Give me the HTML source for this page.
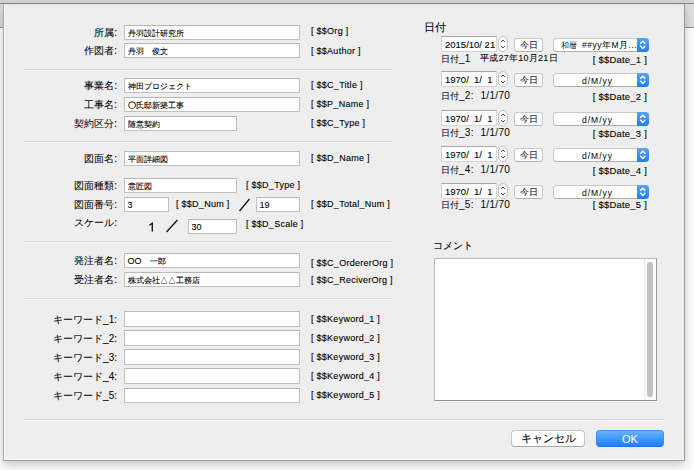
<!DOCTYPE html>
<html><head><meta charset="utf-8"><style>
*{box-sizing:border-box}
html,body{margin:0;padding:0;width:694px;height:470px;overflow:hidden;background:#fdfdfd;font-family:'Liberation Sans', sans-serif;color:#000}
.lab,.rlab,.dlab,.btn,.pbtn{-webkit-text-stroke:0.06px #000}
.bgtop{position:absolute;left:0;top:0;width:694px;height:4px;background:#d4d2d6;border-bottom:1px solid #8a8a8a}
.bgl{position:absolute;left:0;top:4px;width:3px;height:24px;background:#dcdcdc;border-bottom:1px solid #8c8c8c}
.bgr{position:absolute;left:685px;top:4px;width:9px;height:24px;background:#dedede;border-bottom:1px solid #8c8c8c}
.dlg{position:absolute;left:3px;top:4px;width:682px;height:457px;background:#eeeeee;border-left:1px solid #a9a9a9;border-right:1px solid #999;border-bottom:1px solid #9a9a9a;box-shadow:0 4px 9px rgba(0,0,0,0.22), inset 1px 0 0 #f8f8f8, inset 0 -1px 0 #fafafa, inset 0 3px 3px -2px rgba(0,0,0,0.07)}
.abs{position:absolute}
.lab{position:absolute;left:0;width:117px;text-align:right;height:15px;line-height:15px;font-size:10px;white-space:nowrap}
.fld{position:absolute;-webkit-text-stroke:0.1px #000;height:15px;background:#fff;border:1px solid #c0c0c0;border-top-color:#b8b8b8;font-size:8px;line-height:13px;padding-top:1px;padding-left:2.5px;white-space:nowrap;overflow:hidden}
.tag{position:absolute;-webkit-text-stroke:0.12px #000;height:15px;line-height:15px;font-size:9px;letter-spacing:0.27px;white-space:nowrap}
.la{font-style:normal;font-size:9px}
.one{position:absolute;font-size:13px;line-height:15px}
.sl{position:absolute}
.sep{position:absolute;height:2px;border-top:1px solid #d8d8d8;border-bottom:1px solid #f6f6f6}
.rlab{position:absolute;font-size:10px;line-height:15px;white-space:nowrap}
.dfld{position:absolute;-webkit-text-stroke:0.1px #000;width:56px;height:16px;background:#fff;border:1px solid #d6d6d6;border-top-color:#a9a9a9;font-size:9.5px;line-height:14px;padding-top:1px;padding-left:3px;white-space:nowrap}
.step{position:absolute;width:10px;height:16px;border:1px solid #c4c4c4;border-radius:5px;background:#fdfdfd}
.step svg{position:absolute;left:-1px;top:-1px}
.btn{position:absolute;width:29px;height:14px;background:#fff;border:1px solid #c9c9c9;border-bottom-color:#b0b0b0;border-radius:3px;font-size:9px;line-height:12px;text-align:center}
.pop{position:absolute;width:96px;height:14px;background:#fff;border:1px solid #c9c9c9;border-bottom-color:#aeaeae;border-radius:3px;font-size:10px;line-height:12px;text-align:center;padding-right:12px;white-space:nowrap}
.pop span{position:absolute;top:0}
.pb{position:absolute;right:-1px;top:-1px;width:12px;height:14px;background:linear-gradient(#58a2f9,#1d7df7);border-radius:0 4px 4px 0}
.pb svg{position:absolute;left:0;top:0}
.lt{font-size:10px;-webkit-text-stroke:0;letter-spacing:0.3px}
.vj{font-size:9px;letter-spacing:0.25px}
.dlab{position:absolute;font-size:9px;line-height:15px;white-space:nowrap}
.dtag{position:absolute;-webkit-text-stroke:0.1px #000;width:100px;text-align:right;font-size:9.5px;letter-spacing:0.2px;line-height:15px;white-space:nowrap}
.ta{position:absolute;left:434px;top:258px;width:223px;height:143px;background:#fff;border:1px solid #bcbcbc;border-right-color:#9a9a9a;border-bottom-color:#909090;box-shadow:0 1px 0 #f8f8f8}
.sb{position:absolute;right:0;top:0;width:12px;height:141px;background:#fafafa;border-left:1px solid #ececec}
.th{position:absolute;left:2px;top:3px;width:6px;height:135px;background:#c2c2c2;border-radius:4px}
.pbtn{position:absolute;height:17px;background:#fff;border:1px solid #c6c6c6;border-bottom-color:#a9a9a9;border-radius:4px;font-size:11px;line-height:15px;text-align:center}
.okbtn{position:absolute;height:17px;background:linear-gradient(#6ab1fa,#1a81fb);border:1px solid #3d8ef5;border-bottom-color:#1f6fe8;border-radius:4px;font-size:11px;line-height:16px;text-align:center;color:#fff}
</style></head>
<body>
<div class="bgtop"></div><div class="bgl"></div><div class="bgr"></div>
<div class="dlg"></div>
<div class="lab" style="top:25px">所属:</div>
<div class="fld" style="left:124px;top:25px;width:176px;height:15px"><span>丹羽設計研究所</span></div>
<div class="tag" style="left:311px;top:24px">[ $$Org ]</div>
<div class="lab" style="top:43px">作図者:</div>
<div class="fld" style="left:124px;top:43px;width:176px;height:15px"><span>丹羽　俊文</span></div>
<div class="tag" style="left:311px;top:44px">[ $$Author ]</div>
<div class="lab" style="top:78px">事業名:</div>
<div class="fld" style="left:124px;top:78px;width:176px;height:15px"><span>神田プロジェクト</span></div>
<div class="tag" style="left:311px;top:78px">[ $$C_Title ]</div>
<div class="lab" style="top:97px">工事名:</div>
<div class="fld" style="left:124px;top:97px;width:176px;height:15px"><span><b style="font-weight:normal;-webkit-text-stroke:0.35px #000">〇</b>氏邸新築工事</span></div>
<div class="tag" style="left:311px;top:97px">[ $$P_Name ]</div>
<div class="lab" style="top:116px">契約区分:</div>
<div class="fld" style="left:124px;top:116px;width:113px;height:15px"><span>随意契約</span></div>
<div class="tag" style="left:311px;top:116px">[ $$C_Type ]</div>
<div class="lab" style="top:151px">図面名:</div>
<div class="fld" style="left:124px;top:151px;width:176px;height:15px"><span>平面詳細図</span></div>
<div class="tag" style="left:311px;top:151px">[ $$D_Name ]</div>
<div class="lab" style="top:178px">図面種類:</div>
<div class="fld" style="left:124px;top:178px;width:113px;height:15px"><span>意匠図</span></div>
<div class="tag" style="left:246px;top:178px">[ $$D_Type ]</div>
<div class="lab" style="top:197px">図面番号:</div>
<div class="fld" style="left:124px;top:197px;width:45px;height:15px"><span><i class=la>3</i></span></div>
<div class="tag" style="left:176px;top:197px">[ $$D_Num ]</div>
<div class="lab" style="top:253px">発注者名:</div>
<div class="fld" style="left:124px;top:253px;width:176px;height:15px"><span><i class=la>OO</i>　一郎</span></div>
<div class="tag" style="left:311px;top:256px">[ $$C_OrdererOrg ]</div>
<div class="lab" style="top:272px">受注者名:</div>
<div class="fld" style="left:124px;top:272px;width:176px;height:15px"><span>株式会社△△工務店</span></div>
<div class="tag" style="left:311px;top:273px">[ $$C_ReciverOrg ]</div>
<div class="lab" style="top:312px">キーワード_1:</div>
<div class="fld" style="left:124px;top:311px;width:176px;height:16px"><span></span></div>
<div class="tag" style="left:311px;top:312px">[ $$Keyword_1 ]</div>
<div class="lab" style="top:331px">キーワード_2:</div>
<div class="fld" style="left:124px;top:330px;width:176px;height:16px"><span></span></div>
<div class="tag" style="left:311px;top:331px">[ $$Keyword_2 ]</div>
<div class="lab" style="top:350px">キーワード_3:</div>
<div class="fld" style="left:124px;top:349px;width:176px;height:16px"><span></span></div>
<div class="tag" style="left:311px;top:350px">[ $$Keyword_3 ]</div>
<div class="lab" style="top:369px">キーワード_4:</div>
<div class="fld" style="left:124px;top:368px;width:176px;height:16px"><span></span></div>
<div class="tag" style="left:311px;top:369px">[ $$Keyword_4 ]</div>
<div class="lab" style="top:388px">キーワード_5:</div>
<div class="fld" style="left:124px;top:388px;width:176px;height:15px"><span></span></div>
<div class="tag" style="left:311px;top:388px">[ $$Keyword_5 ]</div>
<div class="fld" style="left:256px;top:197px;width:44px;height:15px"><span><i class=la>19</i></span></div>
<div class="tag" style="left:311px;top:197px">[ $$D_Total_Num ]</div>
<svg class="sl" style="left:238px;top:198px" width="13" height="14"><path d="M1.5 13 L11.5 1" stroke="#111" stroke-width="1.3"/></svg>
<div class="lab" style="top:215px">スケール:</div>
<svg class="sl" style="left:147px;top:221px" width="8" height="12"><path d="M2.4 4.3 L5.3 2.2 L5.3 10.4" fill="none" stroke="#111" stroke-width="1.35"/></svg>
<svg class="sl" style="left:165px;top:219px" width="14" height="14"><path d="M1.5 13 L12.5 1" stroke="#111" stroke-width="1.3"/></svg>
<div class="fld" style="left:188px;top:219px;width:49px;height:15px"><span><i class=la>30</i></span></div>
<div class="tag" style="left:246px;top:217px">[ $$D_Scale ]</div>
<div class="sep" style="left:24px;top:69px;width:369px"></div>
<div class="sep" style="left:24px;top:141px;width:369px"></div>
<div class="sep" style="left:24px;top:241px;width:369px"></div>
<div class="sep" style="left:24px;top:298px;width:369px"></div>
<div class="sep" style="left:24px;top:419px;width:641px"></div>
<div class="rlab" style="left:424px;top:20px;font-size:11px">日付</div>
<div class="dfld" style="left:441px;top:36px"><span>2015/10/ 21</span></div>
<div class="step" style="left:498px;top:36px"><svg width="10" height="16"><path d="M3 6 L5 4 L7 6 M3 10 L5 12 L7 10" fill="none" stroke="#444" stroke-width="0.9"/></svg></div>
<div class="btn" style="left:514px;top:38px">今日</div>
<div class="pop" style="left:553px;top:38px"><span style='left:7px;font-size:8px;top:1px'>和暦</span><span style='left:28px;font-size:8.5px;letter-spacing:0.5px;top:0'>##yy年M月...</span><div class="pb"><svg width="12" height="14"><path d="M3.2 5.8 L5.8 3.2 L8.4 5.8 M3.2 7.8 L5.8 10.4 L8.4 7.8" fill="none" stroke="#fff" stroke-width="1.4"/></svg></div></div>
<div class="dlab" style="left:441px;top:51px">日付<span class="lt">_1</span></div>
<div class="dlab" style="left:480px;top:51px"><span class="vj">平成27年10月21日</span></div>
<div class="dtag" style="left:547px;top:52px">[ $$Date_1 ]</div>
<div class="dfld" style="left:441px;top:71px"><span>1970/&nbsp; 1/&nbsp; 1</span></div>
<div class="step" style="left:498px;top:71px"><svg width="10" height="16"><path d="M3 6 L5 4 L7 6 M3 10 L5 12 L7 10" fill="none" stroke="#444" stroke-width="0.9"/></svg></div>
<div class="btn" style="left:514px;top:73px">今日</div>
<div class="pop" style="left:553px;top:73px"><span style='left:28px;font-size:8.5px;letter-spacing:1px;top:1px'>d/M/yy</span><div class="pb"><svg width="12" height="14"><path d="M3.2 5.8 L5.8 3.2 L8.4 5.8 M3.2 7.8 L5.8 10.4 L8.4 7.8" fill="none" stroke="#fff" stroke-width="1.4"/></svg></div></div>
<div class="dlab" style="left:441px;top:88px">日付<span class="lt">_2:</span></div>
<div class="dlab" style="left:480.5px;top:88px"><span class="lt">1/1/70</span></div>
<div class="dtag" style="left:547px;top:89px">[ $$Date_2 ]</div>
<div class="dfld" style="left:441px;top:110px"><span>1970/&nbsp; 1/&nbsp; 1</span></div>
<div class="step" style="left:498px;top:110px"><svg width="10" height="16"><path d="M3 6 L5 4 L7 6 M3 10 L5 12 L7 10" fill="none" stroke="#444" stroke-width="0.9"/></svg></div>
<div class="btn" style="left:514px;top:112px">今日</div>
<div class="pop" style="left:553px;top:112px"><span style='left:28px;font-size:8.5px;letter-spacing:1px;top:1px'>d/M/yy</span><div class="pb"><svg width="12" height="14"><path d="M3.2 5.8 L5.8 3.2 L8.4 5.8 M3.2 7.8 L5.8 10.4 L8.4 7.8" fill="none" stroke="#fff" stroke-width="1.4"/></svg></div></div>
<div class="dlab" style="left:441px;top:125px">日付<span class="lt">_3:</span></div>
<div class="dlab" style="left:480.5px;top:125px"><span class="lt">1/1/70</span></div>
<div class="dtag" style="left:547px;top:126px">[ $$Date_3 ]</div>
<div class="dfld" style="left:441px;top:146px"><span>1970/&nbsp; 1/&nbsp; 1</span></div>
<div class="step" style="left:498px;top:146px"><svg width="10" height="16"><path d="M3 6 L5 4 L7 6 M3 10 L5 12 L7 10" fill="none" stroke="#444" stroke-width="0.9"/></svg></div>
<div class="btn" style="left:514px;top:148px">今日</div>
<div class="pop" style="left:553px;top:148px"><span style='left:28px;font-size:8.5px;letter-spacing:1px;top:1px'>d/M/yy</span><div class="pb"><svg width="12" height="14"><path d="M3.2 5.8 L5.8 3.2 L8.4 5.8 M3.2 7.8 L5.8 10.4 L8.4 7.8" fill="none" stroke="#fff" stroke-width="1.4"/></svg></div></div>
<div class="dlab" style="left:441px;top:162px">日付<span class="lt">_4:</span></div>
<div class="dlab" style="left:480.5px;top:162px"><span class="lt">1/1/70</span></div>
<div class="dtag" style="left:547px;top:163px">[ $$Date_4 ]</div>
<div class="dfld" style="left:441px;top:183px"><span>1970/&nbsp; 1/&nbsp; 1</span></div>
<div class="step" style="left:498px;top:183px"><svg width="10" height="16"><path d="M3 6 L5 4 L7 6 M3 10 L5 12 L7 10" fill="none" stroke="#444" stroke-width="0.9"/></svg></div>
<div class="btn" style="left:514px;top:185px">今日</div>
<div class="pop" style="left:553px;top:185px"><span style='left:28px;font-size:8.5px;letter-spacing:1px;top:1px'>d/M/yy</span><div class="pb"><svg width="12" height="14"><path d="M3.2 5.8 L5.8 3.2 L8.4 5.8 M3.2 7.8 L5.8 10.4 L8.4 7.8" fill="none" stroke="#fff" stroke-width="1.4"/></svg></div></div>
<div class="dlab" style="left:441px;top:197px">日付<span class="lt">_5:</span></div>
<div class="dlab" style="left:480.5px;top:197px"><span class="lt">1/1/70</span></div>
<div class="dtag" style="left:547px;top:197px">[ $$Date_5 ]</div>
<div class="rlab" style="left:432.5px;top:238px;font-size:10px">コメント</div>
<div class="ta"><div class="sb"><div class="th"></div></div></div>
<div class="pbtn" style="left:511px;top:430px;width:74px">キャンセル</div>
<div class="okbtn" style="left:596px;top:430px;width:68px">OK</div>
</body></html>
